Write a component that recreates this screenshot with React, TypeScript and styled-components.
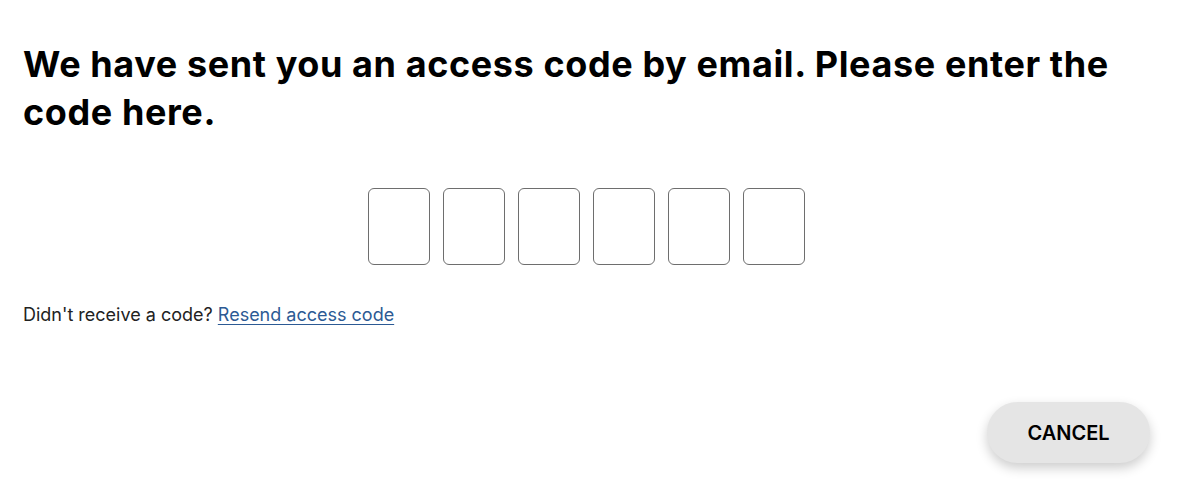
import React from "react";
import styled, { createGlobalStyle } from "styled-components";

const GlobalStyle = createGlobalStyle`
  html, body {
    margin: 0;
    padding: 0;
    background: #ffffff;
    font-family: "Inter", "Liberation Sans", sans-serif;
  }
`;

function App() {
  const digits = ["", "", "", "", "", ""];

  return (
    <Page>
      <GlobalStyle />
      <Title>We have sent you an access code by email. Please enter the code here.</Title>
      <CodeRow>
        {digits.map((d, i) => (
          <CodeBox key={i} maxLength={1} defaultValue={d} aria-label={`Digit ${i + 1}`} />
        ))}
      </CodeRow>
      <Hint>
        Didn't receive a code? <ResendLink href="#">Resend access code</ResendLink>
      </Hint>
      <Footer>
        <CancelButton>CANCEL</CancelButton>
      </Footer>
    </Page>
  );
}

const Page = styled.div`
  padding: 40px 24px 30px 23px;
  display: flex;
  flex-direction: column;
`;

const Title = styled.h1`
  margin: 0;
  font-family: "Inter", "Liberation Sans", sans-serif;
  font-size: 36px;
  font-weight: 700;
  line-height: 48px;
  letter-spacing: 0.6px;
  color: #000000;
  max-width: 1110px;
`;

const CodeRow = styled.div`
  display: flex;
  justify-content: center;
  gap: 13px;
  margin-top: 52px;
  padding-right: 7px;
`;

const CodeBox = styled.input`
  width: 62px;
  height: 77px;
  box-sizing: border-box;
  border: 1.5px solid #6e6e6e;
  border-radius: 6px;
  background: #ffffff;
  font-family: "Inter", "Liberation Sans", sans-serif;
  font-size: 28px;
  text-align: center;
  outline: none;
`;

const Hint = styled.p`
  margin: 38px 0 0;
  font-family: "Inter", "Liberation Sans", sans-serif;
  font-size: 18px;
  line-height: 24px;
  color: #222222;
`;

const ResendLink = styled.a`
  color: #2c5a94;
  text-decoration: underline;
  text-underline-offset: 3px;
`;

const Footer = styled.div`
  display: flex;
  justify-content: flex-end;
  margin-top: 75px;
  padding-right: 6px;
`;

const CancelButton = styled.button`
  width: 163px;
  height: 61px;
  border: none;
  border-radius: 31px;
  background: #e5e5e5;
  box-shadow: 0 5px 12px rgba(0, 0, 0, 0.2);
  font-family: "Inter", "Liberation Sans", sans-serif;
  font-size: 20px;
  font-weight: 600;
  color: #000000;
  cursor: pointer;
`;

export default App;
